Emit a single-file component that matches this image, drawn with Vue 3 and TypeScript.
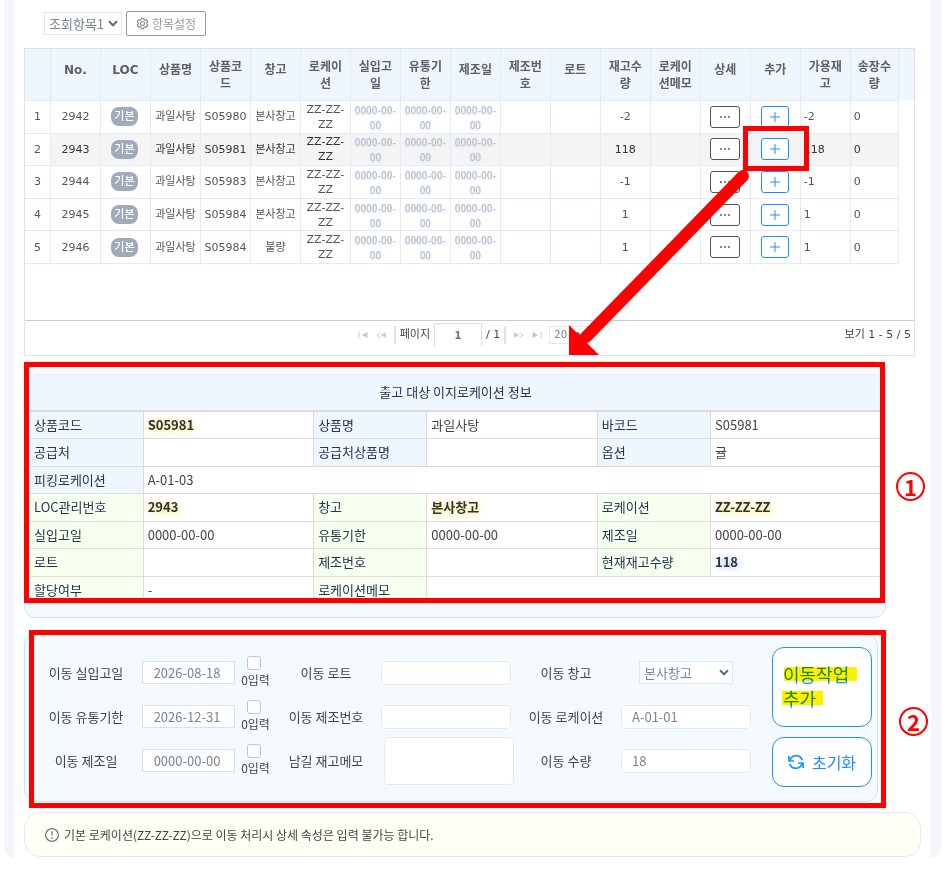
<script setup lang="ts">
import { ref } from 'vue'

interface StockRow {
  no: string
  name: string
  code: string
  warehouse: string
  location: string
  qty: string
  available: string
  invoice: string
}

interface Field {
  label: string
  value: string
  tone?: 'yellow' | 'blue'
  span?: number
}

const headers = [
  'No.', 'LOC', '상품명', '상품코드', '창고', '로케이션', '실입고일', '유통기한', '제조일',
  '제조번호', '로트', '재고수량', '로케이션메모', '상세', '추가', '가용재고', '송장수량',
]

const row = (no: string, code: string, warehouse: string, qty: string): StockRow => ({
  no, name: '과일사탕', code, warehouse, location: 'ZZ-ZZ-ZZ', qty, available: qty, invoice: '0',
})

const rows: StockRow[] = [
  row('2942', 'S05980', '본사창고', '-2'),
  row('2943', 'S05981', '본사창고', '118'),
  row('2944', 'S05983', '본사창고', '-1'),
  row('2945', 'S05984', '본사창고', '1'),
  row('2946', 'S05984', '불량', '1'),
]

const selectedNo = ref('2943')
const emptyDate = '0000-00-00'

const details: { group: 'g-product' | 'g-stock'; fields: Field[] }[] = [
  { group: 'g-product', fields: [{ label: '상품코드', value: 'S05981', tone: 'yellow' }, { label: '상품명', value: '과일사탕' }, { label: '바코드', value: 'S05981' }] },
  { group: 'g-product', fields: [{ label: '공급처', value: '' }, { label: '공급처상품명', value: '' }, { label: '옵션', value: '귤' }] },
  { group: 'g-product', fields: [{ label: '피킹로케이션', value: 'A-01-03', span: 5 }] },
  { group: 'g-stock', fields: [{ label: 'LOC관리번호', value: '2943', tone: 'yellow' }, { label: '창고', value: '본사창고', tone: 'yellow' }, { label: '로케이션', value: 'ZZ-ZZ-ZZ', tone: 'yellow' }] },
  { group: 'g-stock', fields: [{ label: '실입고일', value: emptyDate }, { label: '유통기한', value: emptyDate }, { label: '제조일', value: emptyDate }] },
  { group: 'g-stock', fields: [{ label: '로트', value: '' }, { label: '제조번호', value: '' }, { label: '현재재고수량', value: '118', tone: 'blue' }] },
  { group: 'g-stock', fields: [{ label: '할당여부', value: '-' }, { label: '로케이션메모', value: '', span: 3 }] },
]

const inDate = ref('2026-08-18')
const expDate = ref('2026-12-31')
const mfgDate = ref(emptyDate)
const zeroIn = ref(false)
const zeroExp = ref(false)
const zeroMfg = ref(false)
const lot = ref('')
const mfgNo = ref('')
const memo = ref('')
const warehouse = ref('본사창고')
const location = ref('A-01-01')
const moveQty = ref('18')
const page = ref('1')
</script>

<template>
  <main class="page">
    <div class="toolbar">
      <span class="select-wrap preset">
        <select aria-label="조회항목"><option>조회항목1</option></select>
        <svg class="chevron" viewBox="0 0 10 7"><path d="M1 1.3l4 4 4-4" /></svg>
      </span>
      <button type="button" class="config">
        <svg viewBox="0 0 16 16" class="gear">
          <path d="M6.6 1.500h2.800l.4 1.800 1.500.8 1.800-.5 1.400 2.400-1.300 1.300v1.400l1.300 1.300-1.400 2.400-1.800-.5-1.500.8-.4 1.800H6.600l-.4-1.800-1.500-.8-1.800.5-1.400-2.400 1.300-1.300V7.300L1.500 6l1.400-2.400 1.800.5 1.500-.8z" />
          <circle cx="8" cy="8" r="2.4" />
        </svg>
        항목설정
      </button>
    </div>

    <section class="grid">
      <div class="grid-body">
        <table class="stock">
          <colgroup><col class="c-index" /><col v-for="h in headers" :key="h" class="c-data" /></colgroup>
          <thead>
            <tr><th></th><th v-for="h in headers" :key="h" :class="{ single: h.length < 4 }">{{ h }}</th></tr>
          </thead>
          <tbody>
            <tr v-for="(r, i) in rows" :key="r.no" :class="{ selected: r.no === selectedNo }">
              <td class="index">{{ i + 1 }}</td>
              <td>{{ r.no }}</td>
              <td class="loc"><span class="badge">기본</span></td>
              <td>{{ r.name }}</td>
              <td>{{ r.code }}</td>
              <td>{{ r.warehouse }}</td>
              <td>{{ r.location }}</td>
              <td v-for="n in 3" :key="n" class="empty-date">{{ emptyDate }}</td>
              <td></td>
              <td></td>
              <td>{{ r.qty }}</td>
              <td></td>
              <td>
                <button type="button" class="mini more" aria-label="상세">
                  <svg viewBox="0 0 12 4"><path d="M1 1h2v2H1zM5 1h2v2H5zM9 1h2v2H9z" /></svg>
                </button>
              </td>
              <td class="add-cell">
                <button type="button" class="mini add" aria-label="추가" @click="selectedNo = r.no">
                  <svg viewBox="0 0 10 10"><path d="M5 0v10M0 5h10" /></svg>
                </button>
                <span v-if="i === 1" class="mark mark-add"></span>
              </td>
              <td class="left">{{ r.available }}</td>
              <td class="left">{{ r.invoice }}</td>
            </tr>
          </tbody>
        </table>
      </div>
      <footer class="pager">
        <div class="pages">
          <button type="button" class="nav" aria-label="첫 페이지"><svg viewBox="0 0 10 6"><path d="M0 0h1v6H0zM9 0v6L3 3z" /></svg></button>
          <button type="button" class="nav" aria-label="이전 페이지"><svg viewBox="0 0 12 6"><path d="M11 0v6L5 3z" /><path class="thin" d="M5 .5L1 3l4 2.5" /></svg></button>
          <span class="sep"></span>
          <label for="page">페이지</label>
          <input id="page" v-model="page" />
          <span>/ 1</span>
          <span class="sep"></span>
          <button type="button" class="nav" aria-label="다음 페이지"><svg viewBox="0 0 12 6"><path d="M1 0v6l6-3z" /><path class="thin" d="M7 .5L11 3 7 5.5" /></svg></button>
          <button type="button" class="nav" aria-label="마지막 페이지"><svg viewBox="0 0 10 6"><path d="M9 0h1v6H9zM1 0v6l6-3z" /></svg></button>
          <span class="select-wrap size">
            <select aria-label="페이지 크기"><option>20</option></select>
            <svg class="chevron" viewBox="0 0 10 7"><path d="M1 1.3l4 4 4-4" /></svg>
          </span>
        </div>
        <span class="range">보기 1 - 5 / 5</span>
      </footer>
    </section>

    <section class="detail">
      <table class="info">
        <caption>출고 대상 이지로케이션 정보</caption>
        <colgroup><template v-for="n in 3" :key="n"><col class="c-label" /><col class="c-value" /></template></colgroup>
        <tbody>
          <tr v-for="(d, i) in details" :key="i" :class="d.group">
            <template v-for="f in d.fields" :key="f.label">
              <th scope="row">{{ f.label }}</th>
              <td :colspan="f.span ?? 1" :class="f.tone">{{ f.value }}</td>
            </template>
          </tr>
        </tbody>
      </table>
      <span class="mark mark-detail"></span>
      <span class="step">1</span>
    </section>

    <form class="move" @submit.prevent>
      <div class="fields">
        <label for="in-date">이동 실입고일</label>
        <div class="cell">
          <input id="in-date" v-model="inDate" class="date" />
          <label class="zero"><input v-model="zeroIn" type="checkbox" />0입력</label>
        </div>
        <label for="lot">이동 로트</label>
        <div class="cell"><input id="lot" v-model="lot" class="text" /></div>
        <label for="warehouse">이동 창고</label>
        <div class="cell">
          <span class="select-wrap warehouse">
            <select id="warehouse" v-model="warehouse"><option>본사창고</option><option>불량</option></select>
            <svg class="chevron" viewBox="0 0 10 7"><path d="M1 1.3l4 4 4-4" /></svg>
          </span>
        </div>

        <label for="exp-date">이동 유통기한</label>
        <div class="cell">
          <input id="exp-date" v-model="expDate" class="date" />
          <label class="zero"><input v-model="zeroExp" type="checkbox" />0입력</label>
        </div>
        <label for="mfg-no">이동 제조번호</label>
        <div class="cell"><input id="mfg-no" v-model="mfgNo" class="text" /></div>
        <label for="location">이동 로케이션</label>
        <div class="cell"><input id="location" v-model="location" class="text" /></div>

        <label for="mfg-date">이동 제조일</label>
        <div class="cell">
          <input id="mfg-date" v-model="mfgDate" class="date" />
          <label class="zero"><input v-model="zeroMfg" type="checkbox" />0입력</label>
        </div>
        <label for="memo">남길 재고메모</label>
        <div class="cell memo"><textarea id="memo" v-model="memo"></textarea></div>
        <label for="qty">이동 수량</label>
        <div class="cell"><input id="qty" v-model="moveQty" class="text" /></div>
      </div>
      <div class="actions">
        <button type="submit" class="action submit">
          <span class="marker wide">이동작업</span><span class="marker">추가</span>
        </button>
        <button type="button" class="action reset">
          <svg viewBox="0 0 16 14">
            <path d="M2 5.8A6.300 6.300 0 0 1 14.200 5.200M14 8.200A6.300 6.300 0 0 1 1.800 8.800" />
            <path d="M1 1v5h5M15 13V8h-5" />
          </svg>
          초기화
        </button>
      </div>
      <span class="mark mark-move"></span>
      <span class="step">2</span>
    </form>

    <p class="notice">
      <svg viewBox="0 0 14 14"><circle cx="7" cy="7" r="6.4" /><path d="M7 3.200v4.600M7 9.200v1.700" /></svg>
      기본 로케이션(ZZ-ZZ-ZZ)으로 이동 처리시 상세 속성은 입력 불가능 합니다.
    </p>

    <svg class="arrow" viewBox="0 0 184 190" aria-hidden="true">
      <path d="M175 11L18 172" />
      <polygon points="1,160 13,172 20,179 31,190 1,190" />
    </svg>
  </main>
</template>

<style>
body {
  margin: 0;
  background: #fff;
}
</style>

<style scoped>
* {
  box-sizing: border-box;
}

.page {
  position: relative;
  margin: 0 5px 0 4px;
  padding: 11px 10px 1px;
  border: solid #f5f6f9;
  border-width: 0 10px;
  border-radius: 0 0 10px 10px;
  background: #fff;
  color: #444;
  font-family: "Noto Sans CJK KR", "Noto Sans", sans-serif;
  font-size: 13px;
  line-height: 18px;
}

button,
input,
select,
textarea {
  margin: 0;
  font: inherit;
}

button {
  cursor: pointer;
}

svg {
  display: block;
  flex: none;
}

.toolbar {
  display: flex;
  align-items: center;
  gap: 4px;
  height: 25px;
  margin: 0 0 12px 20px;
}

.select-wrap {
  position: relative;
  display: flex;
  background: #fff;
}

.select-wrap select {
  width: 100%;
  height: 100%;
  padding: 0 0 0 4px;
  border: 1px solid #e1e7f0;
  border-radius: 0;
  appearance: none;
  background: transparent;
  color: #7c8494;
}

.chevron {
  position: absolute;
  top: 50%;
  right: 4px;
  width: 10px;
  height: 7px;
  margin-top: -4px;
  fill: none;
  stroke: #606b80;
  stroke-width: 2;
  pointer-events: none;
}

.preset {
  width: 78px;
  height: 23px;
}

.config {
  display: flex;
  align-items: center;
  gap: 3px;
  height: 25px;
  padding: 0 9px;
  border: 1px solid #999;
  border-radius: 2px;
  background: #fff;
  color: #999;
  font-size: 12px;
}

.gear {
  width: 13px;
  height: 13px;
  fill: none;
  stroke: #888;
  stroke-width: 1.4;
}

/* stock grid */
.grid {
  margin-right: 6px;
  border: 1px solid #d8e3ef;
  font-family: "DejaVu Sans", "Noto Sans CJK KR", sans-serif;
  font-size: 11px;
  line-height: 16px;
}

.grid-body {
  height: 271px;
  background: linear-gradient(#eff6ff, #eff6ff) top / 100% 51px no-repeat;
}

.stock {
  width: calc(100% - 15px);
  height: 215px;
  border-collapse: separate;
  border-spacing: 0;
  table-layout: fixed;
}

.c-index {
  width: 26px;
}

.c-data {
  width: 5.72%;
}

.c-data:last-child {
  width: auto;
}

.stock th,
.stock td {
  padding: 0 2px;
  border-right: 1px solid #e2ebf6;
  border-bottom: 1px solid #e2ebf6;
  text-align: center;
  word-break: break-all;
}

.stock th {
  height: 52px;
  padding: 2px 7px 0;
  color: #606060;
  font-size: 12px;
  line-height: 17px;
}

.stock th.single {
  padding: 0 0 9px;
}

.stock td {
  height: 32px;
  background: #fff;
  color: #555;
  line-height: 15px;
}

.stock .selected td:not(.index) {
  background: #f4f4f4;
  color: #333;
}

.stock td.left {
  padding-left: 3px;
  text-align: left;
}

.stock td.empty-date,
.stock .selected td.empty-date {
  color: #bcc0c6;
  font-family: "Noto Sans CJK KR", sans-serif;
  font-size: 10px;
  font-weight: 500;
  text-shadow: 0 1px 2px #cfdff5;
}

.stock td.loc {
  padding: 0 4px 0 2px;
}

.badge {
  display: inline-block;
  padding: 1px 3px;
  border-radius: 8px;
  background: #9faabd;
  color: #fff;
  font-weight: 500;
  line-height: 17px;
  vertical-align: middle;
}

.mini {
  display: inline-flex;
  align-items: center;
  justify-content: center;
  height: 22px;
  padding: 0;
  border: 1px solid currentColor;
  border-radius: 3px;
  background: #fff;
  vertical-align: middle;
}

.more {
  width: 30px;
  color: #555;
}

.more svg {
  width: 12px;
  height: 4px;
  fill: #7b8794;
}

.add {
  width: 28px;
  color: #1f8fff;
}

.add svg {
  width: 10px;
  height: 10px;
  stroke: currentColor;
}

.add-cell {
  position: relative;
}

.pager {
  display: grid;
  grid-template-columns: 1fr auto 1fr;
  height: 35px;
  padding: 2px 3px 0 12px;
  border-top: 1px solid #c9cdd2;
}

.pages {
  display: flex;
  grid-column: 2;
  align-items: center;
  gap: 4px;
  height: 23px;
}

.nav {
  display: flex;
  padding: 0;
  border: 0;
  background: none;
  margin-right: 3px;
}

.nav svg {
  width: 11px;
  height: 6px;
  fill: #c9c9c9;
}

.nav .thin {
  fill: none;
  stroke: #c9c9c9;
}

.sep {
  width: 2px;
  height: 18px;
  background: #e2e2e2;
}

.sep + .nav {
  margin-left: 3px;
}

.pages input {
  width: 48px;
  height: 23px;
  padding: 0;
  border: 1px solid #d6dfea;
  border-bottom: 0;
  color: #6b7280;
  font-size: 10px;
  font-weight: 700;
  text-align: center;
}

.size {
  width: 41px;
  height: 18px;
  font-size: 10px;
}

.range {
  align-self: start;
  line-height: 23px;
  text-align: right;
}

/* item information */
.detail {
  position: relative;
  margin: 5px 35px 0 0;
  padding: 12px 4px 13px 5px;
  border: 1px solid #cbe3fa;
  border-radius: 12px;
  background: #f5fafe;
}

.info {
  width: 100%;
  height: 194px;
  border-collapse: collapse;
  table-layout: fixed;
  background: #fff;
}

.info caption {
  height: 36px;
  border-top: 1px solid #e4e9f0;
  border-radius: 8px 8px 0 0;
  background: #eff6ff;
  color: #24364d;
  line-height: 34px;
}

.c-label {
  width: 13.3%;
}

.info th,
.info td {
  height: 27px;
  padding: 0 4px;
  border: 1px solid #dcdcdc;
  line-height: 18px;
  text-align: left;
}

.info tr > :first-child {
  border-left: 0;
}

.info tr > :last-child {
  border-right: 0;
}

.info tr:first-child > * {
  border-top: 2px solid #dcdcdc;
}

.info th {
  background: #eff6ff;
  color: #24364d;
  font-weight: 400;
}

.info .g-stock th {
  background: #f7ffef;
}

.info .yellow,
.info .blue {
  color: #333;
  font-weight: 700;
}

.info .yellow {
  text-shadow: 0 0 6px #f3ec8c, 2px 2px 6px #f8f3a8;
}

.info .blue {
  text-shadow: 0 0 6px #b5d6ff, 2px 2px 6px #c9e0ff;
}

/* move form */
.move {
  position: relative;
  display: flex;
  align-items: center;
  gap: 13px;
  height: 169px;
  margin: 15px 43px 0 0;
  padding: 0 5px 2px 14px;
  border: 1px solid #c9e2fd;
  border-radius: 12px;
  background: #f5fafe;
}

.fields {
  display: grid;
  flex: 1;
  grid-template-columns: repeat(3, 94fr 146fr);
  grid-auto-rows: 44px;
  align-items: center;
}

.fields > label {
  text-align: center;
}

.cell {
  display: flex;
  align-items: center;
  justify-content: center;
  gap: 6px;
  height: 44px;
}

.cell input,
.cell textarea {
  border: 1px solid #e6e9ef;
  border-radius: 4px;
  background: #fff;
  color: #7c8494;
}

.cell .date {
  width: 93px;
  height: 23px;
  padding: 0 3px 0 0;
  border-color: #d8e1ec;
  border-radius: 0;
  text-align: center;
}

.cell .text {
  width: 130px;
  height: 24px;
  padding: 0 10px;
}

.cell.memo {
  padding-left: 6px;
}

.cell textarea {
  flex: none;
  width: 130px;
  height: 48px;
  resize: none;
}

.zero {
  display: flex;
  flex-direction: column;
  align-items: center;
  gap: 1px;
  width: 29px;
  font-size: 12px;
  white-space: nowrap;
}

.zero input {
  width: 14px;
  height: 14px;
  margin-right: 4px;
  border: 1px solid #c4c4c4;
  border-radius: 3px;
  appearance: none;
}

.zero input:checked {
  background: #1f8fff;
}

.warehouse {
  width: 94px;
  height: 23px;
}

.actions {
  display: flex;
  flex-direction: column;
  gap: 10px;
  width: 100px;
}

.action {
  display: flex;
  border: 1px solid #1f8fff;
  border-radius: 12px;
  background: #fff;
  color: #1f8fff;
}

.submit {
  flex-direction: column;
  align-items: flex-start;
  justify-content: center;
  height: 80px;
  padding: 0 0 2px 10px;
  font-size: 18px;
  line-height: 24px;
  text-align: left;
}

.marker {
  position: relative;
  width: 40px;
}

.marker.wide {
  width: 74px;
}

.marker::after {
  position: absolute;
  inset: 5px 0 5px -1px;
  background: #fff000;
  content: "";
  mix-blend-mode: multiply;
}

.marker.wide::after {
  left: 1px;
}

.reset {
  align-items: center;
  justify-content: center;
  gap: 8px;
  height: 50px;
  padding: 0;
  font-size: 16px;
}

.reset svg {
  width: 16px;
  height: 14px;
  fill: none;
  stroke: currentColor;
  stroke-width: 1.7;
}

.notice {
  display: flex;
  align-items: center;
  gap: 5px;
  height: 45px;
  margin: 10px 0 0;
  padding: 0 20px;
  border: 1px solid #e4e9ef;
  border-radius: 16px;
  background: #fffff8;
  font-size: 12px;
}

.notice svg {
  width: 14px;
  height: 14px;
  fill: none;
  stroke: #6b7280;
  stroke-width: 1.2;
}

/* guide annotations over the screen */
.mark {
  position: absolute;
  z-index: 1;
  border: 5px solid #f00;
  pointer-events: none;
}

.mark-add {
  inset: -8px -9px -6px -8px;
}

.mark-detail {
  inset: 0 0 14px -1px;
}

.mark-move {
  inset: -4px -9px -7px 4px;
}

.step {
  position: absolute;
  top: 50%;
  left: calc(100% + 11px);
  width: 29px;
  height: 29px;
  margin-top: -18px;
  border: 2px solid #f00;
  border-radius: 50%;
  color: #f00;
  font-size: 22px;
  font-weight: 700;
  line-height: 24px;
  text-align: center;
}

.move .step {
  left: calc(100% + 22px);
  margin-top: -11px;
}

.arrow {
  position: absolute;
  z-index: 1;
  top: 165px;
  right: 179px;
  width: 184px;
  height: 190px;
  pointer-events: none;
}

.arrow path {
  fill: none;
  stroke: #f00;
  stroke-linecap: round;
  stroke-width: 12;
}

.arrow polygon {
  fill: #f00;
}
</style>
